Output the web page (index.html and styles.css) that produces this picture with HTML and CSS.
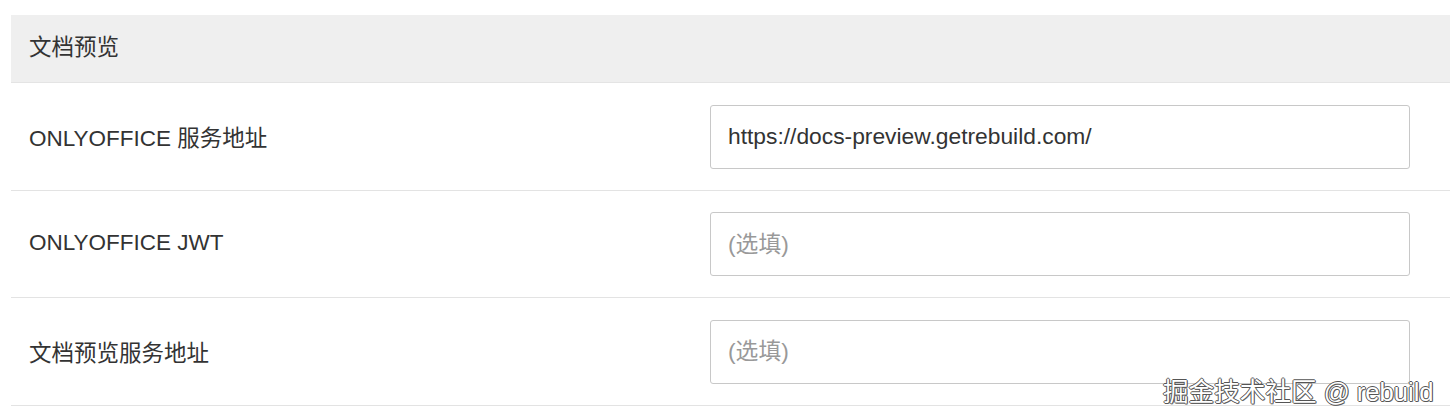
FILE: index.html
```html
<!doctype html>
<html lang="zh">
<head>
    <meta charset="UTF-8">
    <title>文档预览</title>
    <link rel="stylesheet" href="styles.css">
</head>
<body>
<div class="panel">
    <div class="panel-head">文档预览</div>
    <div class="row">
        <div class="label">ONLYOFFICE 服务地址</div>
        <div class="field"><input type="text" value="https://docs-preview.getrebuild.com/"></div>
    </div>
    <div class="row">
        <div class="label">ONLYOFFICE JWT</div>
        <div class="field"><input type="text" placeholder="(选填)"></div>
    </div>
    <div class="row">
        <div class="label">文档预览服务地址</div>
        <div class="field"><input type="text" placeholder="(选填)"></div>
    </div>
</div>
<div class="mark">掘金技术社区 @ rebuild</div>
</body>
</html>
```

FILE: styles.css
```css
*{
    margin: 0;
    padding: 0;
    box-sizing: border-box;
}
body{
    font-family: "Liberation Sans", "Noto Sans CJK SC", sans-serif;
    color: #333;
    background: #fff;
    overflow: hidden;
}
.panel{
    margin: 15px 0 0 11px;
}
.panel-head{
    height: 68px;
    line-height: 66px;
    padding-left: 18px;
    font-size: 22.5px;
    background-color: #efefef;
    border-bottom: 1px solid #e4e4e4;
}
.row{
    display: flex;
    align-items: center;
    height: 107.5px;
    padding-top: 1px;
    border-bottom: 1px solid #e3e3e3;
}
.label{
    width: 699px;
    padding-left: 18px;
    padding-bottom: 2px;
    font-size: 22.5px;
}
.field input{
    width: 700px;
    height: 64px;
    padding: 0 17px;
    font-family: "Liberation Sans", "Noto Sans CJK SC", sans-serif;
    font-size: 22.8px;
    color: #333;
    border: 1px solid #c8c8c8;
    border-radius: 3px;
    outline: none;
}
.field input::placeholder{
    color: #999;
}
.mark{
    position: absolute;
    left: 1163px;
    top: 371px;
    font-size: 25.6px;
    color: #fff;
    text-shadow: -1px 0 #555, 1px 0 #555, 0 -1px #555, 0 1px #555, 1px 1px #888;
}
```
